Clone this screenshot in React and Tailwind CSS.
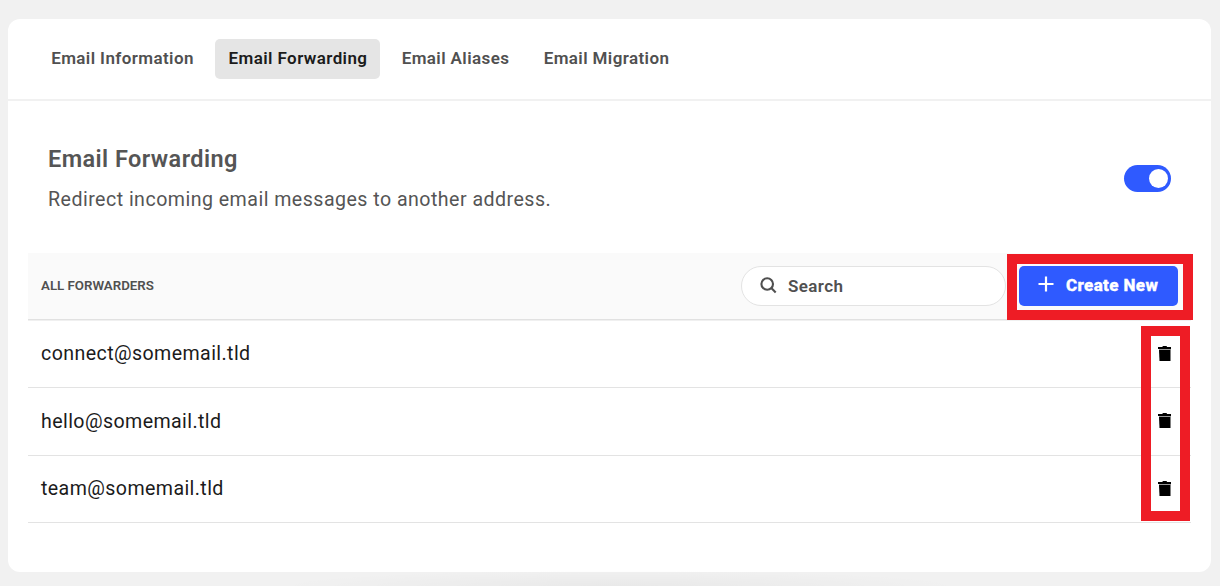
import { useState } from 'react';

const TABS = [
  { label: 'Email Information', className: 'w-[170px] pl-[3px] mr-[9px]' },
  { label: 'Email Forwarding', className: 'w-[165px] pl-px mr-[8px]' },
  { label: 'Email Aliases', className: 'w-[134px] pl-px mr-[8px]' },
  { label: 'Email Migration', className: 'w-[152px] pl-px' },
];

const FORWARDERS = [
  { email: 'connect@somemail.tld', height: 'h-[67px]' },
  { email: 'hello@somemail.tld', height: 'h-[68px]' },
  { email: 'team@somemail.tld', height: 'h-[67px]' },
];

const SearchIcon = () => (
  <svg width="17" height="17" viewBox="0 0 17 17" fill="none" stroke="#4f4f4f" strokeWidth="2.1" className="mb-0.5">
    <circle cx="7.2" cy="7" r="5.8" />
    <path d="M11.3 11.1 L15.7 15.5" />
  </svg>
);

const PlusIcon = () => (
  <svg width="16" height="16" viewBox="0 0 16 16" fill="none" stroke="white" strokeWidth="2.2" className="mb-0.5">
    <path d="M8 0.5 V15.5 M0.5 8 H15.5" />
  </svg>
);

const TrashIcon = () => (
  <svg width="13" height="15" viewBox="0 0 13 15" fill="black">
    <path d="M0 1 H4.6 V0 H8.8 V1 H13 V3 H0 Z" />
    <path d="M1 4 H12.5 V15 H1.5 Z" />
    <path d="M1 3 H13 V4 H1 Z" fill="#999999" />
  </svg>
);

const App = () => {
  const [activeTab, setActiveTab] = useState('Email Forwarding');
  const [enabled, setEnabled] = useState(true);

  return (
    <div className="relative h-[586px] w-[1220px] overflow-hidden bg-[#f1f1f1] pt-[19px] pl-2 font-['Roboto',sans-serif]">
      <div className="h-[553px] w-[1203px] rounded-xl bg-white">
        {/* Tabs */}
        <nav className="flex h-[82px] items-start border-b-2 border-[#f1f1f1] pt-5 pl-7">
          {TABS.map((tab) => (
            <button
              key={tab.label}
              onClick={() => setActiveTab(tab.label)}
              className={`h-10 shrink-0 rounded-[5px] pb-px text-center text-[17px] font-semibold tracking-[0.4px] whitespace-nowrap ${tab.className} ${
                activeTab === tab.label ? 'bg-[#e5e5e5] text-[#1b1b1b]' : 'text-[#505050]'
              }`}
            >
              {tab.label}
            </button>
          ))}
        </nav>

        <div className="flex h-[152px] justify-between pr-10 pl-10 text-[#555555]">
          <div className="pt-[42px]">
            <h1 className="text-[23.5px] leading-8 font-semibold tracking-[0.43px]">Email Forwarding</h1>
            <p className="mt-[9px] text-[19.6px] leading-8 tracking-[0.47px]">
              Redirect incoming email messages to another address.
            </p>
          </div>
          <button
            role="switch"
            aria-checked={enabled}
            aria-label="Email Forwarding"
            onClick={() => setEnabled(!enabled)}
            className={`mt-16 flex h-[27px] w-[47px] items-center rounded-full px-[3.5px] ${
              enabled ? 'justify-end bg-[#2f5aff]' : 'justify-start bg-gray-300'
            }`}
          >
            <span className="h-[19px] w-[19px] rounded-full bg-white" />
          </button>
        </div>

        {/* Forwarders table */}
        <section className="ml-5 w-[1163px]">
          <div className="relative flex h-[68px] items-start border-b border-[#f0f0f0] bg-[#fafafa] pt-[13px] pl-[13px] shadow-[inset_0_-1px_0_#e1e1e1]">
            <h2 className="w-[700px] text-[13.3px] leading-10 font-semibold text-[#505050]">ALL FORWARDERS</h2>
            <label className="flex h-10 w-[265px] items-center rounded-full border border-[#e3e3e3] bg-white pl-[18px]">
              <SearchIcon />
              <input
                placeholder="Search"
                className="ml-[11px] w-[180px] pt-0.5 text-[17px] font-semibold tracking-[0.4px] outline-none placeholder:text-[#505050]"
              />
            </label>
            <button className="ml-[13px] flex h-10 w-[159px] items-center rounded-[5px] bg-[#2f5aff] pb-0.5 pl-[19px] text-[17px] font-extrabold tracking-[0.38px] text-white [-webkit-text-stroke:0.35px_white]">
              <PlusIcon />
              <span className="ml-3 pt-0.5 whitespace-nowrap">Create New</span>
            </button>
            <div className="pointer-events-none absolute top-px left-[979px] h-[66px] w-[186px] border-10 border-[#ee1c25]" />
          </div>

          <div className="relative">
            {FORWARDERS.map(({ email, height }) => (
              <div key={email} className={`flex items-center justify-between border-b border-[#e3e3e3] pr-5 pb-0.5 pl-[13px] ${height}`}>
                <span className="pt-0.5 text-[19.6px] leading-6 tracking-[0.41px] text-[#1b1b1b]">{email}</span>
                <button aria-label={`Delete ${email}`}>
                  <TrashIcon />
                </button>
              </div>
            ))}
            <div className="pointer-events-none absolute top-[5px] left-[1113px] h-[195px] w-[49px] border-10 border-[#ee1c25]" />
          </div>
        </section>
      </div>

      <div className="pointer-events-none absolute bottom-0 left-[270px] h-[16px] w-[700px] bg-[radial-gradient(ellipse_at_bottom,#00000009,transparent_70%)]" />
    </div>
  );
};

export default App;
